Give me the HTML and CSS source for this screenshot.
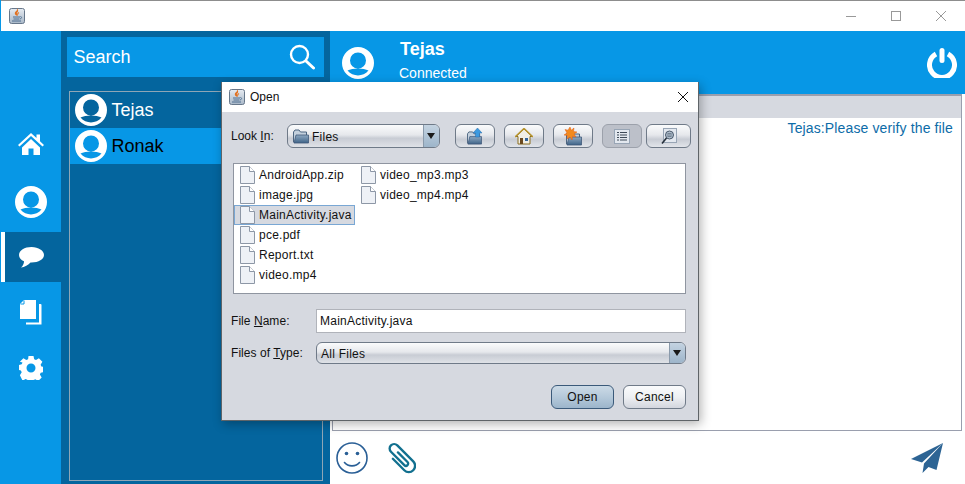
FILE: index.html
```html
<!DOCTYPE html>
<html lang="en">
<head>
    <meta charset="UTF-8">
    <title>Chat</title>
    <link rel="stylesheet" href="styles.css">
</head>
<body>

    <svg class="defs" width="0" height="0">
        <defs>
            <linearGradient id="steel" x1="0" y1="0" x2="0" y2="1">
                <stop offset="0" stop-color="#e6ebf1"/>
                <stop offset="1" stop-color="#a9b8c8"/>
            </linearGradient>
            <linearGradient id="folderFill" x1="0" y1="0" x2="0" y2="1">
                <stop offset="0" stop-color="#8fa9c2"/>
                <stop offset="1" stop-color="#3f6488"/>
            </linearGradient>
            <symbol id="java" viewBox="0 0 16 16">
                <rect x="0.5" y="0.5" width="15" height="15" rx="2" fill="url(#steel)" stroke="#66778a"/>
                <path d="M8.5 2c1 1.500-2 2.500-1 4.500.3.600.8.800 1 1-1.500-.5-2.500-1.500-2-3C7 3.500 8.500 3.200 8.500 2zM10 4.500c-1 .6-1.800 1.200-1.200 2.300" fill="none" stroke="#e2701f" stroke-width="1.100"/>
                <path d="M4 9h7M4.500 11h6M3 13h9" stroke="#4f6f91" stroke-width="1"/>
                <path d="M11.500 8.500c1.500 0 1.500 2-.5 2.500" fill="none" stroke="#4f6f91"/>
            </symbol>
            <symbol id="file" viewBox="0 0 15 18">
                <path d="M0.500 0.500h9l5 5v12h-14z" fill="#eef1f6" stroke="#8d97a6"/>
                <path d="M9.500 0.500v5h5" fill="#fff" stroke="#8d97a6"/>
            </symbol>
            <symbol id="folder" viewBox="0 0 16 15">
                <path d="M0.500 13V3l1.500-2h4l1.500 2h6v10.500H1z" fill="#c3d0dd" stroke="#4c6580"/>
                <path d="M1 14l2-8h12.500v8z" fill="url(#folderFill)" stroke="#40597a" stroke-width="0.800"/>
            </symbol>
            <symbol id="avatar" viewBox="0 0 32 32">
                <path class="avatar-disc" fill-rule="evenodd" d="M16 0a16 16 0 1 0 0 32a16 16 0 1 0 0-32zM16 5.500a8 8 0 1 1 0 16a8 8 0 1 1 0-16zM5.500 23.500c5-2.800 16-2.800 21 0c-5.500 6.500-15.500 6.500-21 0z"/>
            </symbol>
        </defs>
    </svg>

    <div class="titlebar">
        <svg class="app-icon"><use href="#java"/></svg>
        <div class="window-controls">
            <svg width="12" height="12" viewBox="0 0 12 12"><path d="M1 6.500h10" stroke="#999"/></svg>
            <svg width="12" height="12" viewBox="0 0 12 12"><rect x="1.500" y="1.500" width="9" height="9" fill="none" stroke="#999"/></svg>
            <svg width="12" height="12" viewBox="0 0 12 12"><path d="M1 1l10 10M11 1L1 11" stroke="#999"/></svg>
        </div>
    </div>

    <div class="app">
        <nav class="sidebar">
            <div class="nav-item">
                <svg width="26" height="22" viewBox="0 0 26 22"><path d="M13 0L0 12l1.500 1.500L13 3l11.500 10.500L26 12l-4-3.700V1.500h-3.500v3.600zM4 14.500V22h6.500v-6.500h5V22H22v-7.500L13 6z" fill="#fff"/></svg>
            </div>
            <div class="nav-item">
                <svg class="avatar" viewBox="0 0 32 32"><use href="#avatar"/></svg>
            </div>
            <div class="nav-item nav-item-active">
                <svg width="25" height="21" viewBox="0 0 25 21"><path d="M12.500 0C5.500 0 0 3.500 0 8c0 2.800 2 5 5 6.300C5 16.500 4 19 2 20.500c3.500-.2 7.500-2.500 9.500-5 .4 0 .7 0 1 0C19.500 15.500 25 12.300 25 8s-5.500-8-12.500-8z" fill="#fff"/></svg>
            </div>
            <div class="nav-item">
                <svg width="22" height="25" viewBox="0 0 22 25"><path d="M4 0h12v19H0V4z" fill="#fff"/><path d="M19 4h1.500a1 1 0 0 1 1 1v19.500H6V22.500h13z" fill="#fff"/><path d="M4 0.500V4H0.500" fill="none" stroke="#0797e6"/></svg>
            </div>
            <div class="nav-item">
                <svg width="24" height="24" viewBox="0 0 24 24"><path fill-rule="evenodd" fill="#fff" d="M9.500 0h5l.7 3.300 1.800.8 2.900-1.800 3.500 3.500-1.800 2.900.8 1.800 2.600.6v5l-3.300.7-.8 1.800 1.800 2.900-3.500 3.500-2.900-1.800-1.800.8-.5 3h-5l-.7-3.300-1.800-.8-2.900 1.800L.9 19.200l1.800-2.900-.8-1.800-1.900-.5v-5l2.700-.7.8-1.800L.9 5.800 4.400 2.300l2.900 1.800 1.800-.8zM12 7.500a4.500 4.500 0 1 0 0 9 4.500 4.500 0 1 0 0-9z"/></svg>
            </div>
        </nav>

        <section class="contacts">
            <div class="search">
                <span>Search</span>
                <svg width="26" height="26" viewBox="0 0 26 26"><circle cx="10.500" cy="10.500" r="8.500" fill="none" stroke="#fff" stroke-width="2.400"/><path d="M17 17l7.500 7" stroke="#fff" stroke-width="3" stroke-linecap="round"/></svg>
            </div>
            <ul class="contact-list">
                <li class="contact">
                    <svg class="avatar" viewBox="0 0 32 32"><use href="#avatar"/></svg>
                    <span>Tejas</span>
                </li>
                <li class="contact contact-active">
                    <svg class="avatar" viewBox="0 0 32 32"><use href="#avatar"/></svg>
                    <span>Ronak</span>
                </li>
            </ul>
        </section>

        <main class="conversation">
            <header class="chat-header">
                <svg class="avatar" viewBox="0 0 32 32"><use href="#avatar"/></svg>
                <div class="peer">
                    <strong>Tejas</strong>
                    <span>Connected</span>
                </div>
                <svg class="power" width="30" height="30" viewBox="0 0 30 30"><path d="M9 6a12.500 12.500 0 1 0 12 0" fill="none" stroke="#fff" stroke-width="5"/><path d="M15 2.500v10" stroke="#fff" stroke-width="5" stroke-linecap="round"/></svg>
            </header>
            <div class="messages">
                <div class="messages-strip"></div>
                <p class="message">Tejas:Please verify the file</p>
            </div>
            <footer class="composer">
                <svg width="34" height="34" viewBox="0 0 34 34" fill="none" stroke="#2a5f96" stroke-width="1.600"><circle cx="17" cy="17" r="15"/><path d="M9.500 21.500c3.500 4.500 11.500 4.500 15 0" stroke-linecap="round"/><circle cx="11.500" cy="12.500" r="1.800" fill="#2a5f96" stroke="none"/><circle cx="22.500" cy="12.500" r="1.800" fill="#2a5f96" stroke="none"/></svg>
                <svg class="clip" width="30" height="32" viewBox="0 0 30 32" fill="none" stroke="#12708f" stroke-width="2.600" stroke-linecap="round"><path transform="translate(14.500 15.500) rotate(-45) scale(0.9)" d="M-7-5V13a7 7 0 0 0 14 0V-12a5 5 0 0 0-10 0V9a2.500 2.500 0 0 0 5 0V-6"/></svg>
                <svg class="send" width="33" height="30" viewBox="0 0 33 30"><path d="M32 0L0 16l11 3.500zM32 0L13 20.500l-1.500 9.500 6-6 8 3z" fill="#2d6494"/></svg>
            </footer>
        </main>
    </div>

    <div class="dialog">
        <div class="dialog-title">
            <svg class="app-icon"><use href="#java"/></svg>
            <span>Open</span>
            <svg class="dialog-close" width="12" height="12" viewBox="0 0 12 12"><path d="M1 1l10 10M11 1L1 11" stroke="#111"/></svg>
        </div>
        <div class="dialog-body">
            <div class="look-row">
                <label class="look-label">Look <u>I</u>n:</label>
                <div class="combo look-combo">
                    <svg class="folder-icon"><use href="#folder"/></svg>
                    <span class="combo-text">Files</span>
                    <span class="combo-arrow"></span>
                </div>
                <div class="toolbar">
                    <button class="tool">
                        <svg width="17" height="17" viewBox="0 0 17 17"><use href="#folder" width="15" height="14" y="3"/><path d="M10.500 0l4.500 5h-2.500v4h-4V5H6z" fill="#3c9ae0" stroke="#2a6ba8" stroke-width="0.500"/></svg>
                    </button>
                    <button class="tool">
                        <svg width="18" height="17" viewBox="0 0 18 17"><path d="M9 1L1 8.500h2V16h12V8.500h2z" fill="#f1efe6" stroke="#8a6d1f"/><path d="M0 9l9-8.500L18 9" fill="none" stroke="#b8952f" stroke-width="1.500"/><rect x="5" y="10" width="3" height="6" fill="#6b4a1f"/><rect x="10" y="10" width="3" height="3" fill="#33649a"/></svg>
                    </button>
                    <button class="tool">
                        <svg width="18" height="19" viewBox="0 0 18 19"><use href="#folder" width="16" height="15" x="2" y="4"/><path d="M6 0l1.300 3.200L10 1l-.5 3.500L13 5l-3 2 2 3-3.500-.8L8 13 6 10l-3 2 .5-3.500L0 8l3-2L1 2.500l3 .7z" fill="#f28a1e" stroke="#e05a12" stroke-width="0.500"/></svg>
                    </button>
                    <button class="tool tool-on">
                        <svg width="16" height="15" viewBox="0 0 16 15"><rect x="0.500" y="0.500" width="15" height="14" fill="#e3e8ef" stroke="#98a5b5"/><path d="M3 3.500h2M6 3.500h7M3 6h2M6 6h7M3 8.500h2M6 8.500h7M3 11h2M6 11h7" stroke="#3e4a58"/></svg>
                    </button>
                    <button class="tool">
                        <svg width="16" height="17" viewBox="0 0 16 17"><rect x="2.500" y="0.500" width="13" height="14" fill="#e3e8ef" stroke="#98a5b5"/><circle cx="8.500" cy="7" r="4" fill="#aebccb" stroke="#4b5a6b"/><path d="M6 7h5M6.500 5.500h4M6.500 8.500h4" stroke="#4b5a6b" stroke-width="0.600"/><path d="M5.500 10L1 15.500" stroke="#26303b" stroke-width="1.600"/></svg>
                    </button>
                </div>
            </div>

            <ul class="file-list">
                <li class="file"><svg class="file-icon"><use href="#file"/></svg>AndroidApp.zip</li>
                <li class="file"><svg class="file-icon"><use href="#file"/></svg>image.jpg</li>
                <li class="file file-selected"><svg class="file-icon"><use href="#file"/></svg>MainActivity.java</li>
                <li class="file"><svg class="file-icon"><use href="#file"/></svg>pce.pdf</li>
                <li class="file"><svg class="file-icon"><use href="#file"/></svg>Report.txt</li>
                <li class="file"><svg class="file-icon"><use href="#file"/></svg>video.mp4</li>
                <li class="file"><svg class="file-icon"><use href="#file"/></svg>video_mp3.mp3</li>
                <li class="file"><svg class="file-icon"><use href="#file"/></svg>video_mp4.mp4</li>
            </ul>

            <div class="form-row name-row">
                <label class="form-label">File <u>N</u>ame:</label>
                <div class="name-input">MainActivity.java</div>
            </div>
            <div class="form-row type-row">
                <label class="form-label">Files of <u>T</u>ype:</label>
                <div class="combo type-combo">
                    <span class="combo-text">All Files</span>
                    <span class="combo-arrow"></span>
                </div>
            </div>
            <div class="dialog-actions">
                <button class="action action-primary">Open</button>
                <button class="action">Cancel</button>
            </div>
        </div>
    </div>

</body>
</html>
```

FILE: styles.css
```css
:root {
    --blue: #0797e6;
    --dark: #04659e;
    --dialog-bg: #d6d9e0;
}

* {
    box-sizing: border-box;
}

body {
    margin: 0;
    height: 100vh;
    overflow: hidden;
    display: flex;
    flex-direction: column;
    position: relative;
    background-color: var(--blue);
    font-family: "Liberation Sans", Arial, sans-serif;
}

ul {
    list-style: none;
    margin: 0;
    padding: 0;
}

.defs {
    display: block;
}

/* Window title bar */
.titlebar {
    height: 31px;
    flex-shrink: 0;
    margin-left: 1px;
    border-top: 1px solid #8d8d8d;
    background-color: #fff;
    display: flex;
    align-items: center;
    padding-left: 8px;
}

.app-icon {
    width: 16px;
    height: 16px;
    display: block;
}

.window-controls {
    margin-left: auto;
    display: flex;
    gap: 33px;
    padding-right: 18px;
}

/* Main columns */
.app {
    flex: 1;
    min-height: 0;
    display: flex;
    margin-left: 1px;
}

.sidebar {
    width: 60px;
    flex-shrink: 0;
    padding-top: 85px;
    display: grid;
    grid-template-rows: 56px 60px 50px 60px 52px;
    align-content: start;
    background-color: var(--blue);
}

.nav-item {
    display: flex;
    align-items: center;
    justify-content: center;
}

.nav-item-active {
    background-color: var(--dark);
    border-left: 4px solid #fff;
    padding-right: 4px;
}

.avatar {
    width: 32px;
    height: 32px;
    flex-shrink: 0;
    display: block;
    fill: #fff;
}

/* Contact column */
.contacts {
    width: 269px;
    flex-shrink: 0;
    padding: 6px 6px 3px;
    display: flex;
    flex-direction: column;
    gap: 14px;
    background-color: var(--dark);
}

.search {
    height: 40px;
    flex-shrink: 0;
    padding: 0 9px 0 6.5px;
    display: flex;
    align-items: center;
    justify-content: space-between;
    background-color: var(--blue);
    color: #fff;
    font-size: 18px;
}

.contact-list {
    flex: 1;
    margin: 0 1px 0 2px;
    border: 1px solid #8fa6b6;
}

.contact {
    height: 36px;
    padding-left: 5px;
    display: flex;
    align-items: center;
    gap: 4.5px;
    color: #fff;
    font-size: 18px;
}

.contact-active {
    background-color: var(--blue);
    color: #000;
}

/* Conversation column */
.conversation {
    flex: 1;
    min-width: 0;
    display: flex;
    flex-direction: column;
    background-color: #fff;
}

.chat-header {
    height: 63px;
    flex-shrink: 0;
    padding: 0 8px 0 12px;
    display: flex;
    align-items: center;
    background-color: var(--blue);
    color: #fff;
}

.peer {
    margin-left: 25px;
    margin-top: -5px;
    display: flex;
    flex-direction: column;
    gap: 5px;
    font-size: 14px;
}

.peer strong {
    font-size: 18px;
    padding-left: 1px;
}

.power {
    margin-left: auto;
}

.messages {
    flex: 1;
    min-height: 0;
    margin: 0 3px 0 2px;
    border: 1px solid #9a9fae;
    border-top-width: 2px;
}

.messages-strip {
    height: 22px;
    background-color: var(--dialog-bg);
}

.message {
    margin: 2px 8px 0 0;
    text-align: right;
    color: #0d6ca8;
    font-size: 14px;
    letter-spacing: 0.13px;
}

.composer {
    height: 53px;
    flex-shrink: 0;
    padding: 0 21px 0 5px;
    display: flex;
    align-items: center;
}

.clip {
    margin-left: 17px;
}

.send {
    margin-left: auto;
}

/* File chooser dialog */
.dialog {
    position: absolute;
    left: 221px;
    top: 82px;
    width: 478px;
    height: 339px;
    display: flex;
    flex-direction: column;
    border: 1px solid #5f6468;
    border-top: 0;
    background-color: var(--dialog-bg);
    box-shadow: 2px 3px 10px rgba(0, 0, 0, 0.3);
    color: #111;
    font-size: 12px;
    letter-spacing: 0.25px;
}

.dialog-title {
    height: 30px;
    flex-shrink: 0;
    padding: 0 9px 0 7px;
    display: flex;
    align-items: center;
    gap: 5px;
    background-color: #fff;
    letter-spacing: 0;
}

.dialog-close {
    margin-left: auto;
}

.dialog-body {
    flex: 1;
    padding: 12px 12px 0 9px;
}

.look-row {
    height: 24px;
    display: flex;
    align-items: center;
}

.look-label {
    width: 56px;
    flex-shrink: 0;
    letter-spacing: 0;
}

.combo {
    height: 24px;
    display: flex;
    align-items: center;
    border: 1px solid #6f7a88;
    border-radius: 6px;
    overflow: hidden;
    background: linear-gradient(#fafbfc, #e6e8ec 45%, #c8ccd4 60%, #dfe2e7);
}

.combo-text {
    padding-top: 1px;
}

.look-combo {
    width: 153px;
    flex-shrink: 0;
    padding-left: 5px;
    gap: 3px;
}

.folder-icon {
    width: 16px;
    height: 15px;
}

.combo-arrow {
    width: 16px;
    height: 100%;
    margin-left: auto;
    flex-shrink: 0;
    border-left: 1px solid #8a9aab;
    background: linear-gradient(#c4d3e1, #9db5ca);
    position: relative;
}

.combo-arrow::after {
    content: "";
    position: absolute;
    left: 3px;
    top: 8px;
    border: 4px solid transparent;
    border-top: 6px solid #1a1a1a;
    border-bottom: 0;
}

.toolbar {
    margin-left: 15px;
    display: grid;
    grid-template-columns: repeat(4, 40px) 40px;
    column-gap: 9px;
}

.tool {
    height: 24px;
    padding: 0;
    display: flex;
    align-items: center;
    justify-content: center;
    border: 1px solid #6f7a88;
    border-radius: 6px;
    background: linear-gradient(#fafbfc, #e6e8ec 45%, #c8ccd4 65%, #e2e5ea);
}

.tool-on {
    border-color: #9ca1ab;
    background: #bcc0c9;
}

.tool:last-child {
    margin-left: -5px;
}

.file-list {
    height: 131px;
    margin: 15px 0 0 2px;
    padding: 1px 0 0 0;
    display: grid;
    grid-auto-flow: column;
    grid-template-rows: repeat(6, 20px);
    grid-template-columns: 121px max-content;
    border: 1px solid #8f95a0;
    background-color: #fff;
}

.file {
    padding-left: 6px;
    display: flex;
    align-items: center;
    gap: 4px;
    white-space: nowrap;
}

.file-selected {
    padding-left: 5px;
    border: 1px solid #79a7d4;
    background-color: var(--dialog-bg);
}

.file-icon {
    width: 15px;
    height: 18px;
    flex-shrink: 0;
}

.form-row {
    display: flex;
    align-items: center;
}

.name-row {
    margin-top: 15px;
    height: 24px;
}

.type-row {
    margin-top: 9px;
    height: 22px;
}

.form-label {
    width: 85px;
    flex-shrink: 0;
    letter-spacing: 0.05px;
}

.name-input {
    flex: 1;
    height: 24px;
    padding-left: 3px;
    display: flex;
    align-items: center;
    border: 1px solid #b0b3ba;
    background-color: #fff;
}

.type-combo {
    flex: 1;
    height: 22px;
    padding-left: 4px;
}

.type-combo .combo-arrow::after {
    top: 7px;
}

.dialog-actions {
    margin-top: 21px;
    display: flex;
    justify-content: flex-end;
    gap: 9px;
}

.action {
    width: 63px;
    height: 24px;
    padding: 0;
    border: 1px solid #6f7a88;
    border-radius: 6px;
    background: linear-gradient(#fafbfc, #eef0f3 50%, #d3d6de);
    color: #111;
    font: inherit;
    letter-spacing: inherit;
}

.action-primary {
    border-color: #3b5a7a;
    background: linear-gradient(#ccdae6, #b5c9da 50%, #9cb5cb);
}
```
